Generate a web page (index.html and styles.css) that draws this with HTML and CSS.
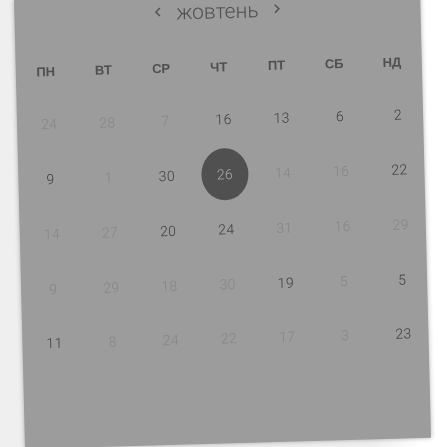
FILE: index.html

```html
<!DOCTYPE html>
<html>
<head>
  <title>Календар</title>
  <link rel="stylesheet" href="styles.css">
</head>
<body>

  <div class="card">
    <div class="month">
      <svg class="arrow" width="7" height="10" viewBox="0 0 7 10"><path d="M5.5 1 L1.5 5 L5.5 9"/></svg>
      <span class="month-name">жовтень</span>
      <svg class="arrow" width="7" height="10" viewBox="0 0 7 10"><path d="M1.5 1 L5.5 5 L1.5 9"/></svg>
    </div>

    <div class="weekdays">
      <span>ПН</span><span>ВТ</span><span>СР</span><span>ЧТ</span><span>ПТ</span><span>СБ</span><span>НД</span>
    </div>

    <div class="days">
      <span class="off">24</span><span class="off">28</span><span class="off">7</span><span>16</span><span>13</span><span>6</span><span>2</span>
      <span>9</span><span class="off">1</span><span>30</span><span class="selected">26</span><span class="off">14</span><span class="off">16</span><span>22</span>
      <span class="off">14</span><span class="off">27</span><span>20</span><span>24</span><span class="off">31</span><span class="off">16</span><span class="off">29</span>
      <span class="off">9</span><span class="off">29</span><span class="off">18</span><span class="off">30</span><span>19</span><span class="off">5</span><span>5</span>
      <span>11</span><span class="off">8</span><span class="off">24</span><span class="off">22</span><span class="off">17</span><span class="off">3</span><span>23</span>
    </div>
  </div>

</body>
</html>
```

FILE: styles.css

```css
html, body {
  height: 100%;
}
body {
  margin: 0;
  overflow: hidden;
  background: linear-gradient(to right, #efefef 0, #efefef 85%, #fff 96%);
  font-family: Roboto, "Liberation Sans", sans-serif;
}
.card {
  box-sizing: border-box;
  width: 406px;
  height: 449px;
  margin-left: 14px;
  padding: 0 1px;
  background: #9c9c9c;
  box-shadow: 0 0 5px rgba(0,0,0,0.3);
  transform: matrix(1, -0.0275, 0.0246, 1, 0, 0);
  transform-origin: 0 0;
  filter: grayscale(1);
}
.month {
  display: flex;
  align-items: center;
  justify-content: center;
  gap: 15px;
  height: 34px;
  color: #505050;
}
.month-name {
  font-size: 21px;
  font-weight: 300;
  line-height: 1;
}
.arrow {
  margin-bottom: 2px;
  fill: none;
  stroke: #505050;
  stroke-width: 1.4;
}
.weekdays, .days {
  display: grid;
  grid-template-columns: repeat(7, 1fr);
  text-align: center;
}
.weekdays {
  align-items: center;
  height: 30px;
  margin-top: 23px;
  margin-bottom: 11px;
  font-family: "Liberation Sans", sans-serif;
  font-size: 13px;
  font-weight: bold;
  color: #505050;
}
.days {
  width: 407px;
  margin-left: 2px;
  grid-auto-rows: 54.75px;
  align-items: center;
  justify-items: center;
  font-size: 14px;
  font-weight: 300;
  letter-spacing: 0.3px;
  color: #404040;
}
.off {
  color: #868686;
}
.selected {
  display: flex;
  align-items: center;
  justify-content: center;
  width: 47px;
  height: 52px;
  border-radius: 50%;
  background: #505050;
  color: #a8a8a8;
}
```
